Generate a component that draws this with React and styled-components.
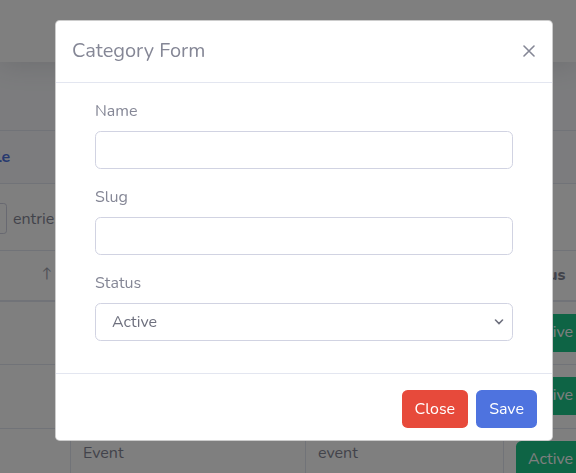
import React from 'react';
import styled, { createGlobalStyle } from 'styled-components';

const GlobalStyle = createGlobalStyle`
  html, body {
    margin: 0;
    padding: 0;
    overflow: hidden;
  }
  body {
    font-family: "Nunito", "Lato", "Noto Sans", sans-serif;
    font-size: 16px;
    line-height: 1.5;
    color: #858796;
    background: #f8f9fc;
  }
  * {
    box-sizing: border-box;
  }
`;

const rows = [
  { name: '', slug: '', status: 'Active' },
  { name: '', slug: '', status: 'Active' },
  { name: 'Event', slug: 'event', status: 'Active' }
];

const App = () => {
  return (
    <>
      <GlobalStyle />
      <Page>
        <Topbar />
        <Content>
          <Card>
            <CardHeader>Category Table</CardHeader>
            <CardBody>
              <LengthRow>
                <ShowLabel>Show</ShowLabel>
                <LengthSelect>10</LengthSelect>
                <span>entries</span>
              </LengthRow>
              <Table>
                <colgroup>
                  <col style={{ width: 199 }} />
                  <col style={{ width: 235 }} />
                  <col style={{ width: 198 }} />
                  <col style={{ width: 200 }} />
                </colgroup>
                <thead>
                  <tr>
                    <Th>#<SortIcon>↑</SortIcon></Th>
                    <Th>Name</Th>
                    <Th>Slug</Th>
                    <Th>Status</Th>
                  </tr>
                </thead>
                <tbody>
                  {rows.map((row, i) => (
                    <tr key={i}>
                      <Td />
                      <Td>{row.name}</Td>
                      <Td>{row.slug}</Td>
                      <Td>
                        <StatusButton>{row.status}</StatusButton>
                      </Td>
                    </tr>
                  ))}
                </tbody>
              </Table>
            </CardBody>
          </Card>
        </Content>
      </Page>

      <Backdrop>
        <Dialog>
          <ModalHeader>
            <ModalTitle>Category Form</ModalTitle>
            <CloseIcon aria-label="Close">
              <svg width="12" height="12" viewBox="0 0 12 12">
                <path d="M1 1L11 11M11 1L1 11" stroke="#858796" strokeWidth="1.6" strokeLinecap="round" />
              </svg>
            </CloseIcon>
          </ModalHeader>
          <ModalBody>
            <Form>
              <Field>
                <Label>Name</Label>
                <Input type="text" />
              </Field>
              <Field>
                <Label>Slug</Label>
                <Input type="text" />
              </Field>
              <Field>
                <Label>Status</Label>
                <SelectBox>
                  <span>Active</span>
                  <svg width="10" height="6" viewBox="0 0 10 6">
                    <path d="M1.5 1L5 4.5L8.5 1" fill="none" stroke="#6e707e" strokeWidth="1.6" strokeLinecap="round" />
                  </svg>
                </SelectBox>
              </Field>
            </Form>
          </ModalBody>
          <ModalFooter>
            <Button $variant="danger">Close</Button>
            <Button $variant="primary">Save</Button>
          </ModalFooter>
        </Dialog>
      </Backdrop>
    </>
  );
};

const Page = styled.div`
  width: 576px;
  height: 473px;
  overflow: hidden;
  background: #f8f9fc;
`;

const Topbar = styled.div`
  height: 62px;
  background: #ffffff;
  box-shadow: 0 0.15rem 1.75rem 0 rgba(58, 59, 69, 0.15);
`;

const Content = styled.div`
  padding-top: 68px;
  margin-left: -150px;
`;

const Card = styled.div`
  width: 1000px;
  background: #ffffff;
  border: 1px solid #e3e6f0;
  border-radius: 0.35rem;
`;

const CardHeader = styled.div`
  height: 53px;
  padding: 0 20px 0 46px;
  display: flex;
  align-items: center;
  background: #f8f9fc;
  border-bottom: 1px solid #e3e6f0;
  color: #4e73df;
  font-weight: 700;
`;

const CardBody = styled.div`
  padding: 19px 20px 20px;
`;

const LengthRow = styled.div`
  display: flex;
  align-items: center;
  gap: 6px;
  height: 31px;
  margin-bottom: 16px;
  color: #858796;
`;

const ShowLabel = styled.span`
  width: 55px;
`;

const LengthSelect = styled.div`
  width: 75px;
  height: 31px;
  border: 1px solid #d1d3e2;
  border-radius: 0.2rem;
  padding: 2px 8px;
  font-size: 14px;
`;

const Table = styled.table`
  border-collapse: collapse;
  table-layout: fixed;
  width: 832px;
  color: #858796;
`;

const Th = styled.th`
  position: relative;
  height: 50px;
  padding: 12px;
  text-align: left;
  font-weight: 800;
  border: 1px solid #e3e6f0;
  border-bottom: 2px solid #e3e6f0;
`;

const SortIcon = styled.span`
  position: absolute;
  right: 18px;
  top: 12px;
  font-weight: 400;
  font-size: 14px;
  color: #858796;
  opacity: 0.8;
`;

const Td = styled.td`
  height: 64px;
  padding: 12px;
  vertical-align: top;
  border: 1px solid #e3e6f0;
`;

const StatusButton = styled.div`
  display: inline-block;
  height: 38px;
  padding: 6px 12px;
  background: #1cc88a;
  color: #ffffff;
  border-radius: 0.35rem;
  width: 90px;
`;

const Backdrop = styled.div`
  position: fixed;
  inset: 0;
  background: rgba(0, 0, 0, 0.5);
  padding: 20px 0 0 55px;
`;

const Dialog = styled.div`
  width: 498px;
  background: #ffffff;
  border: 1px solid rgba(0, 0, 0, 0.2);
  border-radius: 0.3rem;
  display: flex;
  flex-direction: column;
`;

const ModalHeader = styled.div`
  display: flex;
  align-items: center;
  justify-content: space-between;
  padding: 15px 16px 16px;
  border-bottom: 1px solid #e3e6f0;
`;

const ModalTitle = styled.h5`
  margin: 0;
  font-size: 20px;
  font-weight: 400;
  line-height: 30px;
  color: #858796;
`;

const CloseIcon = styled.button`
  border: 0;
  background: transparent;
  padding: 0;
  margin-right: 1px;
  display: flex;
  cursor: pointer;
`;

const ModalBody = styled.div`
  padding: 16px 16px 32px;
`;

const Form = styled.div`
  padding: 0 23px;
  display: flex;
  flex-direction: column;
  gap: 16px;
`;

const Field = styled.div`
  display: flex;
  flex-direction: column;
  gap: 8px;
`;

const Label = styled.label`
  color: #858796;
  line-height: 24px;
`;

const Input = styled.input`
  height: 38px;
  width: 100%;
  border: 1px solid #d1d3e2;
  border-radius: 0.35rem;
  padding: 6px 12px;
  font: inherit;
  color: #6e707e;
  outline: none;
`;

const SelectBox = styled.div`
  height: 38px;
  display: flex;
  align-items: center;
  justify-content: space-between;
  border: 1px solid #d1d3e2;
  border-radius: 0.35rem;
  padding: 0 8px 0 16px;
  color: #6e707e;
`;

const ModalFooter = styled.div`
  display: flex;
  justify-content: flex-end;
  gap: 8px;
  padding: 16px 15px 12px;
  border-top: 1px solid #e3e6f0;
`;

const Button = styled.button`
  height: 38px;
  padding: 0 12px;
  border: 1px solid transparent;
  border-radius: 0.35rem;
  font: inherit;
  color: #ffffff;
  background: ${({ $variant }) => ($variant === 'danger' ? '#e74a3b' : '#4e73df')};
  cursor: pointer;
`;

export default App;
